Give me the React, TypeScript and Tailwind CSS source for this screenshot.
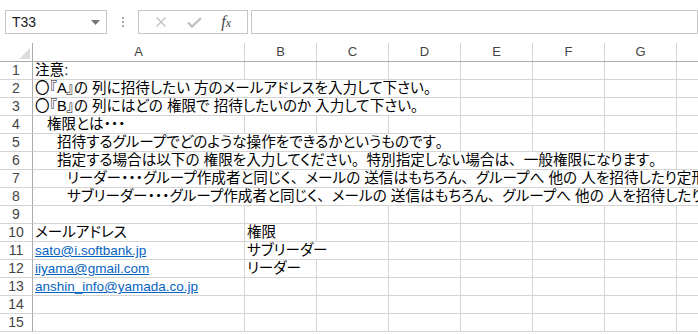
const cols = [
  { name: 'A', w: 212 },
  { name: 'B', w: 72 },
  { name: 'C', w: 72 },
  { name: 'D', w: 72 },
  { name: 'E', w: 72 },
  { name: 'F', w: 72 },
  { name: 'G', w: 72 },
  { name: 'H', w: 72 },
];

type Cell = { text?: string; span?: number; pad?: number; link?: boolean };
type Row = { a?: Cell; b?: Cell };

const rows: Row[] = [
  { a: { text: '注意:' } },
  { a: { text: '〇『A』の 列に招待したい 方のメールアドレスを入力して下さい。', span: 4 } },
  { a: { text: '〇『B』の 列にはどの 権限で 招待したいのか 入力して下さい。', span: 4 } },
  { a: { text: '権限とは・・・', pad: 12 } },
  { a: { text: '招待するグループでどのような操作をできるかというものです。', span: 4, pad: 22 } },
  { a: { text: '指定する場合は以下の 権限を入力してください。特別指定しない場合は、一般権限になります。', span: 7, pad: 22 } },
  { a: { text: 'リーダー・・・グループ作成者と同じく、メールの 送信はもちろん、グループへ 他の 人を招待したり定形メールの設定をすることができます。', span: 8, pad: 32 } },
  { a: { text: 'サブリーダー・・・グループ作成者と同じく、メールの 送信はもちろん、グループへ 他の 人を招待したり定形メールの設定をすることができます。', span: 8, pad: 32 } },
  {},
  { a: { text: 'メールアドレス' }, b: { text: '権限' } },
  { a: { text: 'sato@i.softbank.jp', link: true }, b: { text: 'サブリーダー', span: 2 } },
  { a: { text: 'iiyama@gmail.com', link: true }, b: { text: 'リーダー' } },
  { a: { text: 'anshin_info@yamada.co.jp', link: true } },
  {},
  {},
];

const cellFont = { fontFamily: '"Liberation Sans", "Noto Sans CJK JP", sans-serif' };

// 。 and 、 keep their full width, as the sheet font draws them
function Jp({ text }: { text: string }) {
  return (
    <>
      {text.split(/([。、])/).map((p, i) =>
        p === '。' || p === '、' ? (
          <span key={i} className="[font-feature-settings:normal]">
            {p}
          </span>
        ) : (
          p
        )
      )}
    </>
  );
}

function SheetRow({ row, n }: { row: Row; n: number }) {
  const cells: JSX.Element[] = [];
  let i = 0;
  while (i < cols.length) {
    const c = i === 0 ? row.a : i === 1 ? row.b : undefined;
    const span = c?.span ?? 1;
    const w = cols.slice(i, i + span).reduce((s, x) => s + x.w, 0);
    cells.push(
      <div
        key={i}
        className="shrink-0 h-[18px] border-r border-b border-[#d4d4d4] overflow-hidden whitespace-nowrap text-[14.6px] leading-[17px] text-black [font-feature-settings:'palt']"
        style={{ width: w, paddingLeft: 2 + (c?.pad ?? 0) }}
      >
        {c?.text &&
          (c.link ? (
            <span className="text-[13.5px] text-[#0563c1] underline">{c.text}</span>
          ) : (
            <Jp text={c.text} />
          ))}
      </div>
    );
    i += span;
  }
  return (
    <div className="flex" style={cellFont}>
      <div className="shrink-0 w-[33px] h-[18px] border-r border-b border-r-[#ababab] border-b-[#d4d4d4] text-center text-[14px] leading-[17px] text-[#444]">
        {n}
      </div>
      {cells}
    </div>
  );
}

export default function App() {
  return (
    <div className="w-[698px] h-[334px] overflow-hidden bg-white" style={{ fontFamily: '"Liberation Sans", sans-serif' }}>
      {/* formula bar */}
      <div className="h-[43px] flex items-start pt-[10px] pl-[5px]">
        <div className="w-[102px] h-[24px] border border-[#c6c6c6] flex items-center justify-between pl-[6px] pr-[6px] text-[14px] text-[#222]">
          <span>T33</span>
          <svg width="9" height="5" viewBox="0 0 9 5">
            <path d="M0 0h9L4.5 5z" fill="#767676" />
          </svg>
        </div>
        <div className="w-[31px] h-[24px] flex flex-col items-center justify-center gap-[2px]">
          <span className="w-[2px] h-[2px] bg-[#a8a8a8]" />
          <span className="w-[2px] h-[2px] bg-[#a8a8a8]" />
          <span className="w-[2px] h-[2px] bg-[#a8a8a8]" />
        </div>
        <div className="w-[110px] h-[24px] border border-[#c6c6c6] flex items-center justify-around px-[6px]">
          <svg width="12" height="12" viewBox="0 0 12 12">
            <path d="M1.5 1.5l9 9M10.5 1.5l-9 9" stroke="#bdbdbd" strokeWidth="1.1" />
          </svg>
          <svg width="15" height="12" viewBox="0 0 15 12">
            <path d="M1 6.5l4 4L14 2" stroke="#bdbdbd" strokeWidth="2.2" fill="none" />
          </svg>
          <span className="text-[16px] leading-none italic text-[#444]" style={{ fontFamily: '"Liberation Serif", serif' }}>
            f<span className="text-[12px]">x</span>
          </span>
        </div>
        <div className="ml-[3px] flex-1 h-[24px] border border-[#c6c6c6]" />
      </div>

      {/* column header */}
      <div className="flex h-[19px] border-b border-[#ababab]">
        <div className="shrink-0 w-[33px] border-r border-[#ababab] relative">
          <svg className="absolute right-[2px] bottom-[2px]" width="11" height="11" viewBox="0 0 11 11">
            <path d="M11 0v11H0z" fill="#dcdcdc" />
          </svg>
        </div>
        {cols.map((c) => (
          <div
            key={c.name}
            className="shrink-0 border-r border-[#d4d4d4] text-center text-[13px] leading-[18px] text-[#444]"
            style={{ width: c.w }}
          >
            {c.name}
          </div>
        ))}
      </div>

      {rows.map((r, i) => (
        <SheetRow key={i} row={r} n={i + 1} />
      ))}
    </div>
  );
}
